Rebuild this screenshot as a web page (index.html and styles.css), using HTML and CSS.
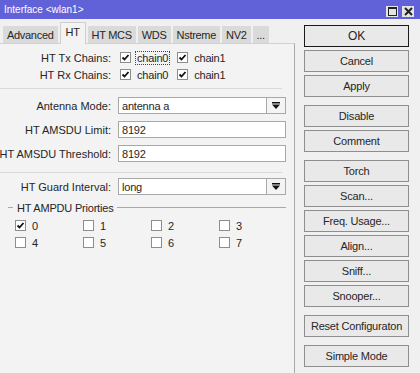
FILE: index.html
```html
<!DOCTYPE html>
<html lang="en">
<head>
  <meta charset="UTF-8">
  <title>Interface &lt;wlan1&gt;</title>
  <link rel="stylesheet" href="styles.css">
</head>
<body>
  <div class="window">
    <div class="titlebar">
      <span class="title">Interface &lt;wlan1&gt;</span>
      <div class="winbtns">
        <span class="winbtn">
          <svg width="9" height="9" viewBox="0 0 9 9"><rect x="0.5" y="0.5" width="8" height="8" fill="none" stroke="#222"/><rect x="0" y="0" width="9" height="2" fill="#222"/></svg>
        </span>
        <span class="winbtn">
          <svg width="9" height="9" viewBox="0 0 9 9"><path d="M1 1 L8 8 M8 1 L1 8" stroke="#222" stroke-width="2"/></svg>
        </span>
      </div>
    </div>

    <div class="content">
      <div class="main">
        <div class="tabs">
          <div class="tab">Advanced</div>
          <div class="tab active">HT</div>
          <div class="tab">HT MCS</div>
          <div class="tab">WDS</div>
          <div class="tab">Nstreme</div>
          <div class="tab">NV2</div>
          <div class="tab">...</div>
        </div>

        <div class="panel">
          <div class="row">
            <div class="label"><span>HT Tx Chains:</span></div>
            <span class="cb checked"><svg width="9" height="9" viewBox="0 0 9 9"><path d="M1.5 4.5 L3.5 6.5 L7.5 2" fill="none" stroke="#111" stroke-width="1.8"/></svg></span>
            <span class="opt focus">chain0</span>
            <span class="cb checked"><svg width="9" height="9" viewBox="0 0 9 9"><path d="M1.5 4.5 L3.5 6.5 L7.5 2" fill="none" stroke="#111" stroke-width="1.8"/></svg></span>
            <span class="opt">chain1</span>
          </div>
          <div class="row">
            <div class="label"><span>HT Rx Chains:</span></div>
            <span class="cb checked"><svg width="9" height="9" viewBox="0 0 9 9"><path d="M1.5 4.5 L3.5 6.5 L7.5 2" fill="none" stroke="#111" stroke-width="1.8"/></svg></span>
            <span class="opt">chain0</span>
            <span class="cb checked"><svg width="9" height="9" viewBox="0 0 9 9"><path d="M1.5 4.5 L3.5 6.5 L7.5 2" fill="none" stroke="#111" stroke-width="1.8"/></svg></span>
            <span class="opt">chain1</span>
          </div>

          <div class="sep first"></div>

          <div class="fields">
            <div class="row">
              <div class="label"><span>Antenna Mode:</span></div>
              <div class="field select">
                <span class="value">antenna a</span>
                <span class="arrow"><svg width="8" height="8" viewBox="0 0 8 8"><rect x="0" y="0" width="8" height="1.5" fill="#111"/><path d="M0 2.5 H8 L4 7 Z" fill="#111"/></svg></span>
              </div>
            </div>
            <div class="row">
              <div class="label"><span>HT AMSDU Limit:</span></div>
              <div class="field"><span class="value">8192</span></div>
            </div>
            <div class="row">
              <div class="label"><span>HT AMSDU Threshold:</span></div>
              <div class="field"><span class="value">8192</span></div>
            </div>
          </div>

          <div class="sep second"></div>

          <div class="row">
            <div class="label"><span>HT Guard Interval:</span></div>
            <div class="field select">
              <span class="value">long</span>
              <span class="arrow"><svg width="8" height="8" viewBox="0 0 8 8"><rect x="0" y="0" width="8" height="1.5" fill="#111"/><path d="M0 2.5 H8 L4 7 Z" fill="#111"/></svg></span>
            </div>
          </div>

          <div class="group-head">
            <span class="line short"></span>
            <span class="group-title">HT AMPDU Priorties</span>
            <span class="line"></span>
          </div>

          <div class="prio">
            <div class="prio-item"><span class="cb checked"><svg width="9" height="9" viewBox="0 0 9 9"><path d="M1.5 4.5 L3.5 6.5 L7.5 2" fill="none" stroke="#111" stroke-width="1.8"/></svg></span>0</div>
            <div class="prio-item"><span class="cb"></span>1</div>
            <div class="prio-item"><span class="cb"></span>2</div>
            <div class="prio-item"><span class="cb"></span>3</div>
            <div class="prio-item"><span class="cb"></span>4</div>
            <div class="prio-item"><span class="cb"></span>5</div>
            <div class="prio-item"><span class="cb"></span>6</div>
            <div class="prio-item"><span class="cb"></span>7</div>
          </div>
        </div>
      </div>

      <div class="side">
        <button class="btn default">OK</button>
        <button class="btn">Cancel</button>
        <button class="btn">Apply</button>

        <button class="btn gap">Disable</button>
        <button class="btn">Comment</button>

        <button class="btn gap">Torch</button>
        <button class="btn">Scan...</button>
        <button class="btn">Freq. Usage...</button>
        <button class="btn">Align...</button>
        <button class="btn">Sniff...</button>
        <button class="btn">Snooper...</button>

        <button class="btn gap">Reset Configuraton</button>

        <button class="btn gap">Simple Mode</button>
      </div>
    </div>
  </div>
</body>
</html>
```

FILE: styles.css
```css
body {
  margin: 0;
  background-color: #f0f0f0;
  font-family: "Liberation Sans", Arial, sans-serif;
  font-size: 11px;
  letter-spacing: -0.2px;
  color: #262626;
}

.window {
  width: 420px;
  height: 373px;
  display: flex;
  flex-direction: column;
  overflow: hidden;
}

/* title bar */
.titlebar {
  height: 19px;
  flex: none;
  background-color: #6262d8;
  display: flex;
  align-items: center;
  justify-content: space-between;
  padding: 0 6px 0 4px;
}

.title {
  color: #fff;
  font-size: 10px;
  letter-spacing: 0;
}

.winbtns {
  display: flex;
  gap: 4px;
  margin-top: 3px;
}

.winbtn {
  width: 12px;
  height: 11px;
  background-color: #e4e4e4;
  display: flex;
  align-items: center;
  justify-content: center;
}

.content {
  flex: 1;
  display: flex;
}

.main {
  width: 295px;
  flex: none;
  display: flex;
  flex-direction: column;
}

/* tabs */
.tabs {
  height: 24px;
  flex: none;
  display: flex;
  align-items: flex-end;
  padding-left: 3px;
  gap: 2px;
}

.tab {
  height: 17px;
  padding: 0 4px;
  background-color: #dadada;
  display: flex;
  align-items: center;
  white-space: nowrap;
  letter-spacing: -0.3px;
}

.tab.active {
  position: relative;
  height: 22px;
  margin-bottom: -1px;
  padding: 3px 5px 0;
  background-color: #f3f3f3;
  border: 1px solid #cfcfcf;
  border-bottom: none;
  box-sizing: border-box;
  align-items: flex-start;
}

.panel {
  flex: 1;
  border-top: 1px solid #d2d2d2;
  border-right: 1px solid #a9a9a9;
  background-color: #f3f3f3;
  padding: 5px 8px 0 0;
}

.row {
  display: flex;
  align-items: center;
  height: 17px;
}

.label {
  width: 111px;
  flex: none;
  margin-right: 7px;
  display: flex;
  justify-content: flex-end;
  overflow: hidden;
  white-space: nowrap;
  letter-spacing: 0;
}

.cb {
  width: 11px;
  height: 11px;
  flex: none;
  box-sizing: border-box;
  border: 1px solid #8d8d8d;
  background-color: #fff;
  display: inline-flex;
  align-items: center;
  justify-content: center;
  margin-left: 2px;
}

.opt {
  margin: 0 5px 0 4px;
  padding: 0 1px;
  border: 1px solid transparent;
  line-height: 12px;
}

.opt.focus {
  border: 1px dotted #444;
}

.sep {
  height: 1px;
  background-color: #d9d9d9;
  margin-right: 4px;
}

.sep.first {
  margin-top: 5px;
  margin-bottom: 8px;
}

.sep.second {
  margin-top: 10px;
  margin-bottom: 5px;
}

.fields {
  display: flex;
  flex-direction: column;
  gap: 7px;
}

.field {
  width: 169px;
  height: 17px;
  box-sizing: border-box;
  border: 1px solid #a8a8a8;
  background-color: #fff;
  display: flex;
  align-items: center;
  padding-left: 3px;
}

.field .value {
  flex: 1;
}

.field .arrow {
  width: 18px;
  height: 100%;
  border-left: 1px solid #a8a8a8;
  display: flex;
  align-items: center;
  justify-content: center;
  background-color: #f4f4f4;
}

/* priorities group */
.group-head {
  display: flex;
  align-items: center;
  height: 13px;
  margin-top: 6px;
  padding-left: 8px;
}

.group-head .line {
  flex: 1;
  height: 1px;
  background-color: #a8a8a8;
}

.group-head .line.short {
  flex: none;
  width: 5px;
}

.group-title {
  padding: 0 4px;
  white-space: nowrap;
}

.prio {
  display: grid;
  grid-template-columns: repeat(4, 68px);
  grid-auto-rows: 17px;
  margin-top: 3px;
  padding-left: 13px;
}

.prio-item {
  display: flex;
  align-items: center;
  gap: 6px;
}

/* right column */
.side {
  flex: 1;
  padding: 6px 0 0 9px;
  display: flex;
  flex-direction: column;
}

.btn {
  width: 105px;
  height: 22px;
  margin-bottom: 3px;
  border: 1px solid #8e8e8e;
  background-color: #e9e9e9;
  font-family: inherit;
  font-size: 11px;
  letter-spacing: -0.2px;
  color: #262626;
  padding: 0;
}

.btn.default {
  border-color: #1a1a1a;
  font-size: 12px;
}

.btn.gap {
  margin-top: 5px;
}
```
